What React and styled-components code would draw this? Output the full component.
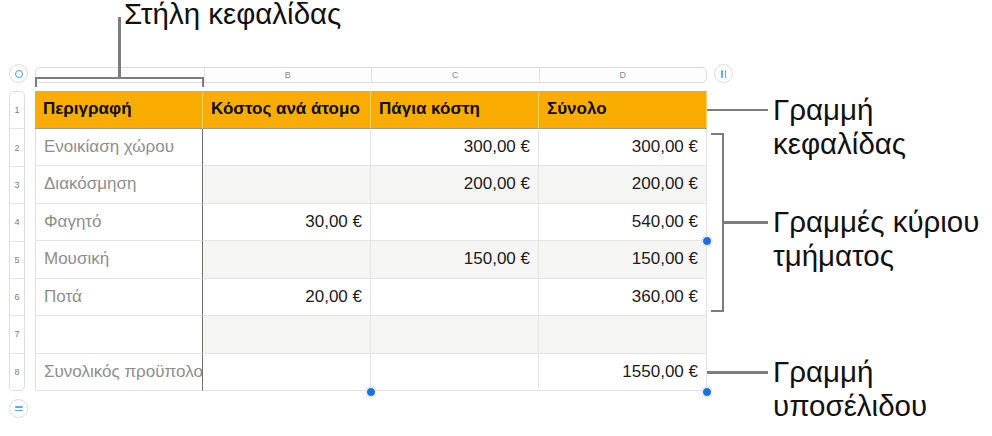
import styled, { createGlobalStyle } from "styled-components";

const GlobalStyle = createGlobalStyle`
  body {
    margin: 0;
    background: #ffffff;
  }
`;

const Page = styled.div`
  width: 992px;
  height: 436px;
  overflow: hidden;
  font-family: "Liberation Sans", Arial, sans-serif;
  color: #111111;
`;

const TitleRow = styled.div`
  height: 67px;
  padding-left: 124px;
  box-sizing: border-box;
  display: flex;
  flex-direction: column;
`;

const Caption = styled.div`
  font-size: 29.5px;
  line-height: 26px;
  padding-top: 1px;
  white-space: nowrap;
`;

const Body = styled.div`
  display: grid;
  grid-template-columns: 35px 672px 1fr;
`;

const Gutter = styled.div`
  display: flex;
  flex-direction: column;
  padding-left: 9px;
`;

const RoundButton = styled.div`
  width: 19px;
  height: 19px;
  box-sizing: border-box;
  border: 1px solid #dcdcdc;
  border-radius: 50%;
  background: #fff;
  display: flex;
  align-items: center;
  justify-content: center;
  gap: 2px;
  flex-direction: ${(p) => (p.$stack ? "column" : "row")};
  margin-top: ${(p) => p.$top || 0}px;
  margin-left: ${(p) => p.$left || 0}px;
`;

const Ring = styled.div`
  width: 8px;
  height: 8px;
  box-sizing: border-box;
  border: 1.5px solid #3f9cf0;
  border-radius: 50%;
`;

const Bar = styled.div`
  background: #5aabf2;
  border-radius: 1px;
  width: ${(p) => (p.$flat ? "8px" : "1.5px")};
  height: ${(p) => (p.$flat ? "1.5px" : "8px")};
`;

const RowNums = styled.div`
  margin-top: 8px;
  width: 16px;
  height: 300px;
  box-sizing: border-box;
  border: 1px solid #dedede;
  border-radius: 5px;
  display: flex;
  flex-direction: column;
  overflow: hidden;
`;

const RowNum = styled.div`
  flex: 1;
  display: flex;
  align-items: center;
  justify-content: center;
  font-size: 9px;
  color: #7c7c7c;
  border-bottom: 1px solid #e6e6e6;

  &:last-child {
    border-bottom: none;
  }
`;

const TableArea = styled.div`
  position: relative;
`;

const ColBar = styled.div`
  height: 16px;
  box-sizing: border-box;
  border: 1px solid #dcdcdc;
  border-radius: 5px;
  display: grid;
  grid-template-columns: repeat(4, 1fr);
  background: #fdfdfd;
`;

const ColLetter = styled.div`
  display: flex;
  align-items: center;
  justify-content: center;
  font-size: 9px;
  color: #8a8a8a;
  border-left: 1px solid #e4e4e4;

  &:first-child {
    border-left: none;
  }
`;

const Table = styled.div`
  margin-top: 8px;
  display: grid;
  grid-template-columns: repeat(4, 168px);
  grid-auto-rows: 37.5px;
`;

const Cell = styled.div`
  box-sizing: border-box;
  display: flex;
  align-items: center;
  justify-content: ${(p) => (p.$num ? "flex-end" : "flex-start")};
  padding: ${(p) => (p.$first ? "0 0 0 8px" : "0 8px")};
  font-size: 17px;
  white-space: nowrap;
  overflow: hidden;
  color: ${(p) => (p.$first ? "#8e8e8e" : "#1b1b1b")};
  background: ${(p) => (p.$shade ? "#f5f5f3" : "#ffffff")};
  border-right: 1px solid ${(p) => (p.$first ? "#707070" : "#e4e4e4")};
  border-bottom: 1px solid #e4e4e4;
  border-left: ${(p) => (p.$first ? "1px solid #e0e0e0" : "none")};
`;

const HeadCell = styled.div`
  box-sizing: border-box;
  display: flex;
  align-items: center;
  padding: 0 8px;
  font-size: 17px;
  font-weight: bold;
  color: #0d0d0d;
  white-space: nowrap;
  overflow: hidden;
  background: #faad00;
  border-right: 1px solid #fccf66;
  border-bottom: 1.5px solid #989898;
`;

const ColBracket = styled.div`
  position: absolute;
  left: 0;
  top: 10px;
  width: 169px;
  height: 10px;
  box-sizing: border-box;
  border: 2.5px solid #7d7d7d;
  border-bottom: none;
`;

const ColStem = styled.div`
  position: absolute;
  left: 83px;
  top: -50px;
  width: 3px;
  height: 61px;
  background: #7d7d7d;
`;

const Handle = styled.div`
  position: absolute;
  width: 8px;
  height: 8px;
  border-radius: 50%;
  background: #1c6fe3;
  border: 1.5px solid #ffffff;
  box-shadow: 0 0 0 0.5px #d8d8d8;
  transform: translate(-50%, -50%);
`;

const Notes = styled.div`
  display: grid;
  grid-template-rows: 24px repeat(8, 37.5px);
`;

const Note = styled.div`
  grid-row: ${(p) => p.$rows};
  display: flex;
  align-items: center;
`;

const Connector = styled.div`
  flex-shrink: 0;
  width: ${(p) => p.$w}px;
  height: 2.5px;
  background: #7d7d7d;
`;

const SideBracket = styled.div`
  align-self: stretch;
  flex-shrink: 0;
  margin: 4px 0 4px 4px;
  width: 13px;
  box-sizing: border-box;
  border: 2.5px solid #7d7d7d;
  border-left: none;
`;

const Label = styled.div`
  margin-left: 5px;
  height: 34px;
  font-size: 29.5px;
  line-height: 34px;
  white-space: nowrap;
`;

const rows = [
  ["Ενοικίαση χώρου", "", "300,00 €", "300,00 €"],
  ["Διακόσμηση", "", "200,00 €", "200,00 €"],
  ["Φαγητό", "30,00 €", "", "540,00 €"],
  ["Μουσική", "", "150,00 €", "150,00 €"],
  ["Ποτά", "20,00 €", "", "360,00 €"],
  ["", "", "", ""],
  ["Συνολικός προϋπολογισμός", "", "", "1550,00 €"],
];

const heads = ["Περιγραφή", "Κόστος ανά άτομο", "Πάγια κόστη", "Σύνολο"];

export default function App() {
  return (
    <Page>
      <GlobalStyle />
      <TitleRow>
        <Caption>Στήλη κεφαλίδας</Caption>
      </TitleRow>
      <Body>
        <Gutter>
          <RoundButton $top={-3}>
            <Ring />
          </RoundButton>
          <RowNums>
            {[1, 2, 3, 4, 5, 6, 7, 8].map((n) => (
              <RowNum key={n}>{n}</RowNum>
            ))}
          </RowNums>
          <RoundButton $top={8} $stack>
            <Bar $flat />
            <Bar $flat />
          </RoundButton>
        </Gutter>

        <TableArea>
          <ColBar>
            <ColLetter />
            <ColLetter>B</ColLetter>
            <ColLetter>C</ColLetter>
            <ColLetter>D</ColLetter>
          </ColBar>
          <Table>
            {heads.map((h) => (
              <HeadCell key={h}>{h}</HeadCell>
            ))}
            {rows.map((r, i) =>
              r.map((v, j) => (
                <Cell
                  key={`${i}-${j}`}
                  $first={j === 0}
                  $num={j > 0}
                  $shade={j > 0 && i % 2 === 1}
                >
                  {v}
                </Cell>
              ))
            )}
          </Table>
          <ColBracket />
          <ColStem />
          <Handle style={{ left: 336, top: 324.5 }} />
          <Handle style={{ left: 672, top: 324.5 }} />
          <Handle style={{ left: 672, top: 174 }} />
        </TableArea>

        <Notes>
          <RoundButton $top={-3} $left={7}>
            <Bar />
            <Bar />
          </RoundButton>
          <Note $rows="2">
            <Connector $w={61} />
            <Label>
              Γραμμή
              <br />
              κεφαλίδας
            </Label>
          </Note>
          <Note $rows="3 / 8">
            <SideBracket />
            <Connector $w={44} />
            <Label>
              Γραμμές κύριου
              <br />
              τμήματος
            </Label>
          </Note>
          <Note $rows="9">
            <Connector $w={61} />
            <Label>
              Γραμμή
              <br />
              υποσέλιδου
            </Label>
          </Note>
        </Notes>
      </Body>
    </Page>
  );
}
